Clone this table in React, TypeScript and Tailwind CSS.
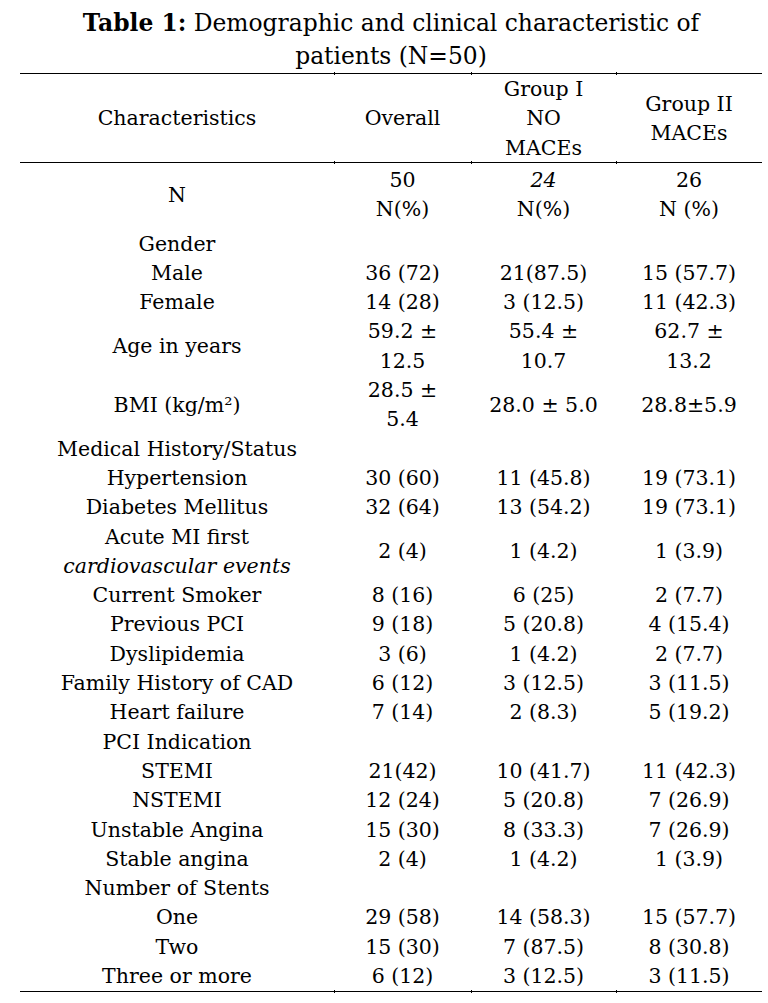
import React from 'react';

type Row = {
  label: React.ReactNode;
  values: React.ReactNode[];
  className?: string;
};

const pm = (a: string, b: string) => (
  <>
    {a} ±<br />
    {b}
  </>
);

const rows: Row[] = [
  {
    label: 'N',
    values: [
      <>50<br />N(%)</>,
      <><span className="italic">24</span><br />N(%)</>,
      <>26<br />N (%)</>,
    ],
    className: 'pt-[2px] pb-[5px]',
  },
  { label: 'Gender', values: ['', '', ''] },
  { label: 'Male', values: ['36 (72)', '21(87.5)', '15 (57.7)'] },
  { label: 'Female', values: ['14 (28)', '3 (12.5)', '11 (42.3)'] },
  { label: 'Age in years', values: [pm('59.2', '12.5'), pm('55.4', '10.7'), pm('62.7', '13.2')] },
  { label: <>BMI (kg/m²)</>, values: [pm('28.5', '5.4'), '28.0 ± 5.0', '28.8±5.9'] },
  { label: 'Medical History/Status', values: ['', '', ''] },
  { label: 'Hypertension', values: ['30 (60)', '11 (45.8)', '19 (73.1)'] },
  { label: 'Diabetes Mellitus', values: ['32 (64)', '13 (54.2)', '19 (73.1)'] },
  {
    label: <>Acute MI first<br /><span className="italic">cardiovascular events</span></>,
    values: ['2 (4)', '1 (4.2)', '1 (3.9)'],
  },
  { label: 'Current Smoker', values: ['8 (16)', '6 (25)', '2 (7.7)'] },
  { label: 'Previous PCI', values: ['9 (18)', '5 (20.8)', '4 (15.4)'] },
  { label: 'Dyslipidemia', values: ['3 (6)', '1 (4.2)', '2 (7.7)'] },
  { label: 'Family History of CAD', values: ['6 (12)', '3 (12.5)', '3 (11.5)'] },
  { label: 'Heart failure', values: ['7 (14)', '2 (8.3)', '5 (19.2)'] },
  { label: 'PCI Indication', values: ['', '', ''] },
  { label: 'STEMI', values: ['21(42)', '10 (41.7)', '11 (42.3)'] },
  { label: 'NSTEMI', values: ['12 (24)', '5 (20.8)', '7 (26.9)'] },
  { label: 'Unstable Angina', values: ['15 (30)', '8 (33.3)', '7 (26.9)'] },
  { label: 'Stable angina', values: ['2 (4)', '1 (4.2)', '1 (3.9)'] },
  { label: 'Number of Stents', values: ['', '', ''] },
  { label: 'One', values: ['29 (58)', '14 (58.3)', '15 (57.7)'] },
  { label: 'Two', values: ['15 (30)', '7 (87.5)', '8 (30.8)'] },
  { label: 'Three or more', values: ['6 (12)', '3 (12.5)', '3 (11.5)'] },
];

const Rule = () => (
  <div className="flex items-center h-[3px]">
    <div className="w-[314px] h-px bg-black" />
    <div className="w-px h-[3px] bg-black" />
    <div className="w-[136px] h-px bg-black" />
    <div className="w-px h-[3px] bg-black" />
    <div className="w-[144px] h-px bg-black" />
    <div className="w-px h-[3px] bg-black" />
    <div className="w-[145px] h-px bg-black" />
  </div>
);

const cols = 'grid grid-cols-[314px_137px_145px_146px]';

export default function App() {
  return (
    <div className="min-h-screen bg-white text-black font-['DejaVu_Serif',serif]">
      <div className="w-[742px] ml-[20px]">
        {/* Caption */}
        <div className="pt-[7px] h-[72px] text-center text-[23.4px] leading-[33px] whitespace-nowrap">
          <span className="font-bold">Table 1:</span> Demographic and clinical characteristic of
          <br />
          patients (N=50)
        </div>

        <Rule />

        {/* Header */}
        <div className={`${cols} h-[86px] items-center text-center text-[20.5px] leading-[29.3px]`}>
          <div>Characteristics</div>
          <div>Overall</div>
          <div>Group I<br />NO<br />MACEs</div>
          <div>Group II<br />MACEs</div>
        </div>

        <Rule />

        {/* Body */}
        <div className="text-[20.5px] leading-[29.3px] text-center">
          {rows.map((row, i) => (
            <div key={i} className={`${cols} items-center ${row.className ?? ''}`}>
              <div className="whitespace-nowrap">{row.label}</div>
              {row.values.map((v, j) => (
                <div key={j} className="whitespace-nowrap">{v}</div>
              ))}
            </div>
          ))}
        </div>

        <div className="-mt-[1px]">
          <Rule />
        </div>
      </div>
    </div>
  );
}
